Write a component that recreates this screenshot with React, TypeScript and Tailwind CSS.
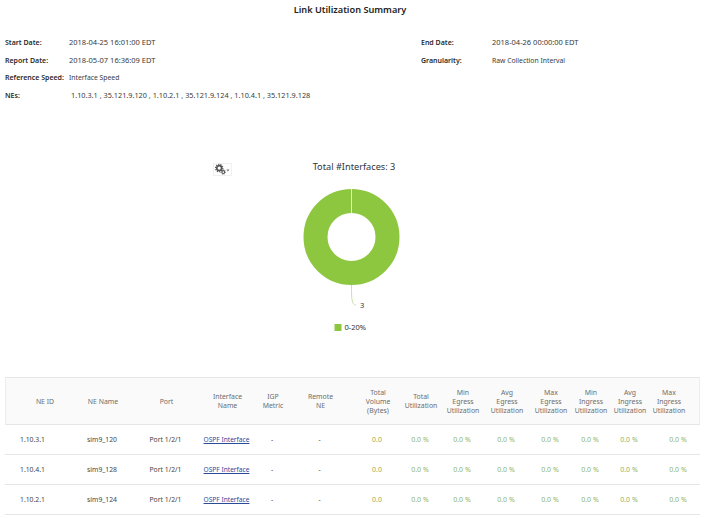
const cols = "grid-cols-[64px_66px_61px_61px_30px_65px_50px_36px_48px_40px_48px_32px_46px_32px_16px]";

function Meta({ label, value, valueClass = "" }: { label: string; value: string; valueClass?: string }) {
  return (
    <div className="flex h-[17.6px] items-center">
      <div className="w-[64px] text-[7px] font-semibold text-[#2a2a2a]">{label}</div>
      <div className={`text-[#3a3a3a] ${valueClass}`}>{value}</div>
    </div>
  );
}

function Gear() {
  return (
    <svg width="18" height="13" viewBox="0 0 18 13">
      <circle cx="5.5" cy="5" r="2.6" fill="none" stroke="#555" strokeWidth="1.8" />
      <circle cx="5.5" cy="5" r="3.9" fill="none" stroke="#555" strokeWidth="1.2" strokeDasharray="1.3 1.1" />
      <circle cx="9.8" cy="9.2" r="1.5" fill="none" stroke="#555" strokeWidth="1.1" />
      <circle cx="9.8" cy="9.2" r="2.4" fill="none" stroke="#555" strokeWidth="0.8" strokeDasharray="1 0.9" />
      <path d="M13 6.5h3.4l-1.7 2z" fill="#777" />
    </svg>
  );
}

const headers = [
  ["NE ID"],
  ["NE Name"],
  ["Port"],
  ["Interface", "Name"],
  ["IGP", "Metric"],
  ["Remote", "NE"],
  ["Total", "Volume", "(Bytes)"],
  ["Total", "Utilization"],
  ["Min", "Egress", "Utilization"],
  ["Avg", "Egress", "Utilization"],
  ["Max", "Egress", "Utilization"],
  ["Min", "Ingress", "Utilization"],
  ["Avg", "Ingress", "Utilization"],
  ["Max", "Ingress", "Utilization"],
];

const rows = [
  ["1.10.3.1", "sim9_120"],
  ["1.10.4.1", "sim9_128"],
  ["1.10.2.1", "sim9_124"],
];

export default function App() {
  return (
    <div className="h-[518px] w-[705px] overflow-hidden bg-white text-[7.5px] leading-[9px] [font-family:'Noto_Sans',sans-serif]">
      <div className="pt-[3px] pr-[5px] text-center text-[9.2px] leading-[13px] font-semibold text-[#222]">Link Utilization Summary</div>
      <div className="mt-[18px] flex pl-[5px]">
        <div className="w-[416px]">
          <Meta label="Start Date:" value="2018-04-25 16:01:00 EDT" />
          <Meta label="Report Date:" value="2018-05-07 16:36:09 EDT" />
          <Meta label="Reference Speed:" value="Interface Speed" valueClass="text-[6.8px]" />
          <Meta label="NEs:" value="1.10.3.1 , 35.121.9.120 , 1.10.2.1 , 35.121.9.124 , 1.10.4.1 , 35.121.9.128" valueClass="ml-[2px] text-[7.3px]" />
        </div>
        <div className="[&>div>div:first-child]:w-[71px]">
          <Meta label="End Date:" value="2018-04-26 00:00:00 EDT" />
          <Meta label="Granularity:" value="Raw Collection Interval" valueClass="text-[6.8px]" />
        </div>
      </div>

      <div className="relative mt-[56px] flex flex-col items-center pr-[4px]">
        <div className="absolute top-[3px] left-[213px] flex h-[13px] w-[19px] items-center justify-center border border-[#f0f0f0]">
          <Gear />
        </div>
        <div className="ml-[7px] text-[9.2px] leading-[13px] text-[#333]">Total #Interfaces: 3</div>
        <svg width="120" height="150" viewBox="0 0 120 150" className="mt-[9px] ml-[3px]">
          <circle cx="59.5" cy="55" r="36" fill="none" stroke="#8dc63f" strokeWidth="24" />
          <line x1="59.5" y1="7" x2="59.5" y2="31" stroke="#e4f0d2" strokeWidth="1" />
          <path d="M59.5 103 C59.5 116 59.5 123 64 123" fill="none" stroke="#c9e2a6" strokeWidth="1" />
          <text x="68" y="126" fontSize="7.5" fill="#333" fontFamily="Noto Sans">3</text>
          <rect x="42.5" y="142" width="7" height="7" fill="#8dc63f" />
          <text x="52.5" y="148" fontSize="7.5" fill="#333" fontFamily="Noto Sans">0-20%</text>
        </svg>
      </div>

      <div className="mt-[45px] ml-[5px] w-[695px]">
        <div className={`grid ${cols} h-[48px] items-stretch border border-x-[#ececec] border-y-[#e6e6e6] bg-[#fafafa] text-center text-[6.9px] text-[#6d6d6d]`}>
          {headers.map((h, i) => (
            <div key={i} className={`flex min-w-0 flex-col items-center justify-center leading-[9px] ${i === 0 ? "pl-[14px]" : ""}`}>
              {h.map((t) => (
                <span key={t} className="whitespace-nowrap">{t}</span>
              ))}
            </div>
          ))}
        </div>
        {rows.map(([id, name]) => (
          <div key={id} className={`grid ${cols} h-[30px] items-center border-b border-[#e6e6e6] text-center text-[6.8px] text-[#444]`}>
            <div className="pl-[15px] text-left">{id}</div>
            <div>{name}</div>
            <div>Port 1/2/1</div>
            <div className="text-[6.6px] whitespace-nowrap text-[#2b4a9a] underline">OSPF Interface</div>
            <div>-</div>
            <div>-</div>
            <div className="text-[7px] text-[#9aab55]">0.0</div>
            {Array.from({ length: 6 }).map((_, i) => (
              <div key={i} className="text-[7px] text-[#8fb368]">0.0 %</div>
            ))}
            <div className="col-span-2 pl-[4px] text-[7px] text-[#8fb368]">0.0 %</div>
          </div>
        ))}
      </div>
    </div>
  );
}
